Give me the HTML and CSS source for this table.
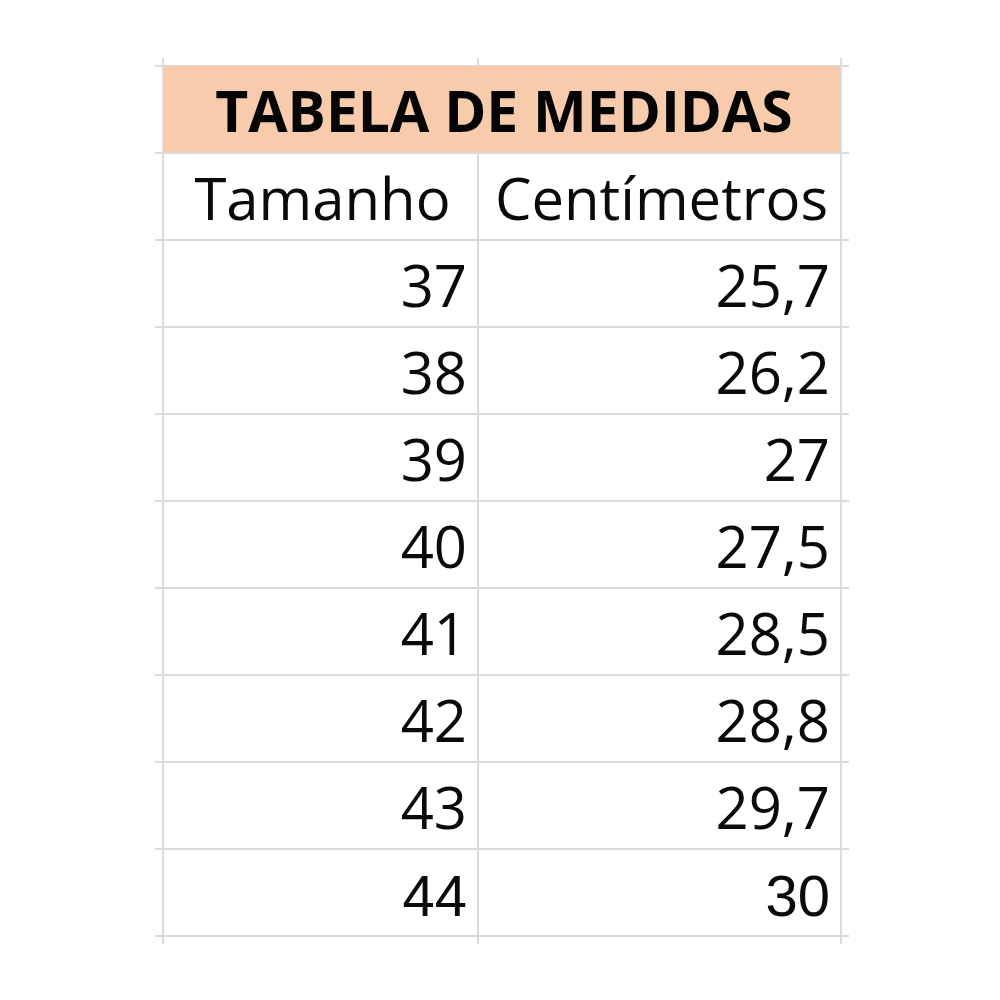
FILE: index.html
```html
<!DOCTYPE html>
<html lang="pt">
<head>
<meta charset="utf-8">
<title>Tabela de medidas</title>
<link rel="stylesheet" href="styles.css">
</head>
<body>
<div class="sheet">
  <div class="grid">
    <div class="title">TABELA DE MEDIDAS</div>
    <div class="cell head">Tamanho</div>
    <div class="cell head">Centímetros</div>
    <div class="cell num">37</div>
    <div class="cell num">25,7</div>
    <div class="cell num">38</div>
    <div class="cell num">26,2</div>
    <div class="cell num">39</div>
    <div class="cell num">27</div>
    <div class="cell num">40</div>
    <div class="cell num">27,5</div>
    <div class="cell num">41</div>
    <div class="cell num">28,5</div>
    <div class="cell num">42</div>
    <div class="cell num">28,8</div>
    <div class="cell num">43</div>
    <div class="cell num">29,7</div>
    <div class="cell num alt">44</div>
    <div class="cell num alt">30</div>
  </div>
</div>
</body>
</html>
```
FILE: styles.css
```css
html, body {
  margin: 0;
  padding: 0;
  background: #ffffff;
}

body {
  font-family: "Open Sans", "Noto Sans", sans-serif;
  color: #0a0a0a;
}

.sheet {
  width: 678px;
  margin: 58px 0 0 155px;
  padding: 8px;
  background-image:
    linear-gradient(#dadada, #dadada),
    linear-gradient(#dadada, #dadada),
    linear-gradient(#dadada, #dadada),
    repeating-linear-gradient(to bottom, #dadada 0 2px, transparent 2px 87px);
  background-size: 2px 100%, 2px 100%, 2px 100%, 100% 100%;
  background-position: 7px 0, 322px 0, 685px 0, 0 7px;
  background-repeat: no-repeat;
}

.grid {
  display: grid;
  grid-template-columns: 315px 363px;
  grid-auto-rows: 87px;
}

.title {
  grid-column: 1 / 3;
  margin: 0 1px 1px 1px;
  background: #f8cbad;
  display: flex;
  align-items: flex-end;
  justify-content: center;
  font-weight: 700;
  font-size: 57px;
  line-height: 1;
  padding-bottom: 13px;
  padding-left: 4px;
  box-sizing: border-box;
  color: #050505;
}

.cell {
  display: flex;
  align-items: flex-end;
  font-size: 58px;
  font-weight: 500;
  line-height: 1;
  padding-bottom: 13px;
  box-sizing: border-box;
}

.head {
  justify-content: center;
  padding-left: 4px;
}

.num {
  justify-content: flex-end;
  padding-right: 11px;
}

.alt {
  font-family: "Liberation Sans", Arial, sans-serif;
  font-weight: 400;
  font-size: 58px;
  padding-bottom: 11px;
}
```
